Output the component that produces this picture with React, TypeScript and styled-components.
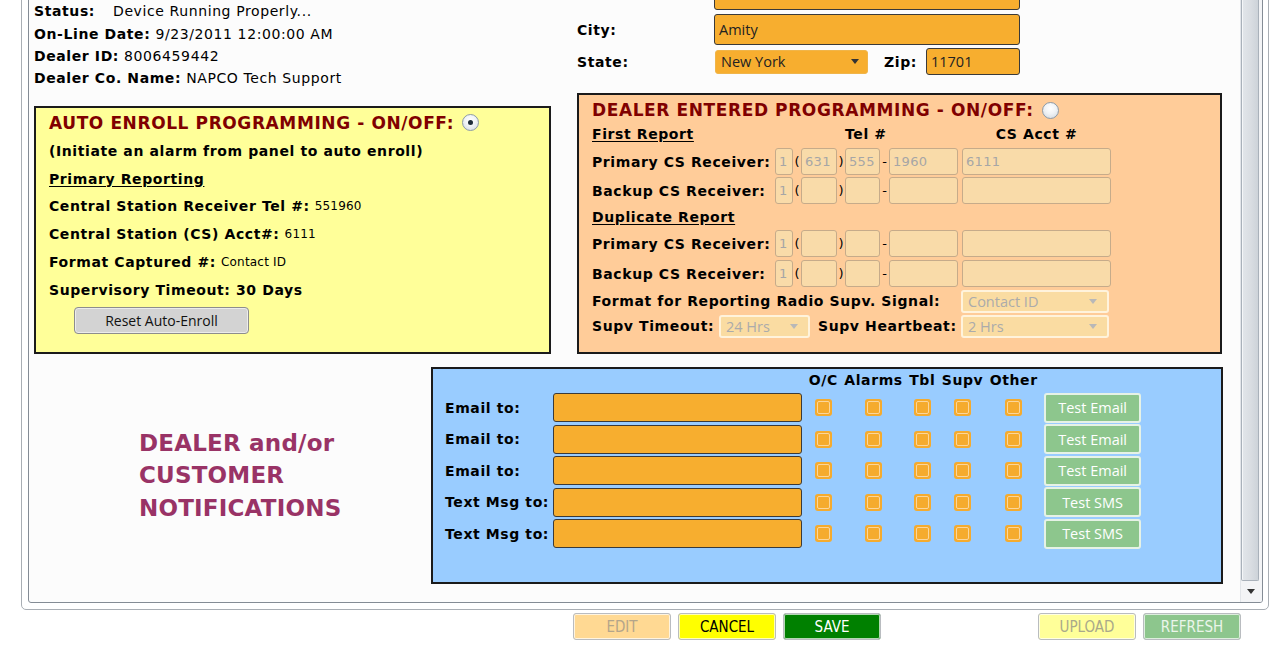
import React from 'react';
import styled, { createGlobalStyle } from 'styled-components';

const GlobalStyle = createGlobalStyle`
  html, body {
    margin: 0;
    padding: 0;
    background: #ffffff;
  }
  body {
    font-family: 'DejaVu Sans', Verdana, sans-serif;
    font-size: 14px;
    letter-spacing: 0.6px;
    color: #000;
  }
  * {
    box-sizing: border-box;
  }
`;

const UI_FONT = `'Open Sans', 'Noto Sans', sans-serif`;
const NARROW_FONT = `'Liberation Sans Narrow', 'DejaVu Sans Condensed', 'Liberation Sans', sans-serif`;

const Page = styled.div`
  width: 1271px;
  height: 663px;
  overflow: hidden;
`;

const OuterFrame = styled.div`
  margin: -14px 0 0 21px;
  width: 1248px;
  height: 624px;
  border: 1px solid #a9aeb4;
  border-radius: 0 0 5px 5px;
  padding: 0 5px 6px 6px;
  display: flex;
`;

const InnerFrame = styled.div`
  flex: 1;
  display: flex;
  border: 1px solid #848c95;
  border-radius: 0 0 3px 3px;
  background: #fcfcfc;
  overflow: hidden;
`;

const ContentArea = styled.div`
  flex: 1;
  overflow: hidden;
`;

// page is scrolled down a little: the top rows sit above the view
const ScrollContent = styled.div`
  margin-top: -10px;
  padding-left: 5px;
`;

const Scrollbar = styled.div`
  width: 22px;
  display: flex;
  flex-direction: column;
  background: #f3f4f6;
  border-left: 1px solid #e2e5e9;
`;

const ScrollThumb = styled.div`
  flex: 1;
  margin: 0 3px 0 0;
  border: 1px solid #a9b1ba;
  border-top: none;
  border-radius: 0 0 2px 2px;
  background: linear-gradient(to right, #e2e6ea, #d9dde2 55%, #cdd3d9);
  box-shadow: inset 1px 0 0 #f4f6f8;
`;

const ScrollArrow = styled.div`
  height: 21px;
  display: flex;
  align-items: center;
  justify-content: center;
  padding-right: 2px;
`;

const TopGrid = styled.div`
  display: grid;
  grid-template-columns: 517px 645px;
  grid-template-rows: 115px auto;
  column-gap: 26px;
`;

const InfoList = styled.div`
  padding-top: 22px;
`;

const InfoLine = styled.div`
  height: 22.4px;
  display: flex;
  align-items: center;
  white-space: nowrap;
`;

const InfoLabel = styled.span<{ $width?: number }>`
  font-weight: bold;
  margin-right: 5px;
  min-width: ${(p) => (p.$width ? `${p.$width}px` : 'auto')};
`;

const AddressBlock = styled.div`
  padding-top: 1px;
  display: flex;
  flex-direction: column;
`;

const FieldRow = styled.div<{ $height: number; $gap?: number }>`
  height: ${(p) => p.$height}px;
  margin-top: ${(p) => p.$gap ?? 0}px;
  display: flex;
  align-items: center;
`;

const FieldLabel = styled.span<{ $width: number; $indent?: number }>`
  width: ${(p) => p.$width}px;
  margin-left: ${(p) => p.$indent ?? 0}px;
  font-weight: bold;
  white-space: nowrap;
  flex-shrink: 0;
`;

const OrangeInput = styled.div<{ $width: number; $height: number }>`
  width: ${(p) => p.$width}px;
  height: ${(p) => p.$height}px;
  background: #f7ae2f;
  border: 1px solid #3a3a3a;
  border-radius: 3px;
  padding-left: 4px;
  display: flex;
  align-items: center;
  font-family: ${UI_FONT};
  font-size: 14.5px;
  letter-spacing: normal;
  color: #222;
  flex-shrink: 0;
`;

const OrangeSelect = styled.div<{ $width: number }>`
  width: ${(p) => p.$width}px;
  height: 24px;
  margin-left: 1px;
  background: #f7ae2f;
  border: 1px solid #f0b54a;
  border-radius: 3px;
  padding: 0 8px 0 5px;
  display: flex;
  align-items: center;
  justify-content: space-between;
  font-family: ${UI_FONT};
  font-size: 14.5px;
  letter-spacing: normal;
  color: #222;
`;

const Caret = styled.span<{ $color: string }>`
  width: 0;
  height: 0;
  border-left: 4px solid transparent;
  border-right: 4px solid transparent;
  border-top: 5px solid ${(p) => p.$color};
`;

const Panel = styled.div<{ $bg: string; $height: number }>`
  align-self: end;
  height: ${(p) => p.$height}px;
  background: ${(p) => p.$bg};
  border: 2px solid #1b1b1b;
  padding: 0 13px;
  display: flex;
  flex-direction: column;
`;

const PanelTitle = styled.div<{ $height: number }>`
  height: ${(p) => p.$height}px;
  display: flex;
  align-items: center;
  gap: 8px;
  color: #800000;
  font-weight: bold;
  font-size: 17px;
  white-space: nowrap;
`;

const Radio = styled.span<{ $checked?: boolean }>`
  width: 17px;
  height: 17px;
  border-radius: 50%;
  border: 1px solid #8c9aa8;
  background: radial-gradient(circle at 50% 35%, #ffffff 0%, #f0f3f6 45%, #cfd6de 100%);
  display: inline-flex;
  align-items: center;
  justify-content: center;
  &::after {
    content: '';
    width: 5px;
    height: 5px;
    border-radius: 50%;
    background: #1d2b38;
    display: ${(p) => (p.$checked ? 'block' : 'none')};
  }
`;

const AutoLine = styled.div`
  height: 27.8px;
  display: flex;
  align-items: center;
  white-space: nowrap;
  font-weight: bold;
`;

const SubHead = styled.span`
  font-weight: bold;
  text-decoration: underline;
  text-underline-offset: 2px;
`;

const SmallValue = styled.span`
  font-weight: normal;
  font-size: 12px;
  letter-spacing: 0.2px;
  margin-left: 5px;
`;

const GrayButton = styled.button`
  margin: 3px 0 0 25px;
  width: 175px;
  height: 27px;
  background: #d3d3d3;
  border: 1px solid #8d8d8d;
  border-radius: 4px;
  box-shadow: inset 0 0 0 1px #ececec;
  font-family: ${UI_FONT};
  font-size: 14px;
  letter-spacing: normal;
  color: #111;
  padding: 0;
`;

const DealerRow = styled.div<{ $height: number; $gap?: number }>`
  height: ${(p) => p.$height}px;
  margin-top: ${(p) => p.$gap ?? 0}px;
  display: flex;
  align-items: center;
  white-space: nowrap;
  flex-shrink: 0;
`;

const HeadCell = styled.span<{ $width: number; $center?: boolean; $indent?: number }>`
  width: ${(p) => p.$width}px;
  padding-left: ${(p) => p.$indent ?? 0}px;
  text-align: ${(p) => (p.$center ? 'center' : 'left')};
  font-weight: bold;
  flex-shrink: 0;
`;

const TanBox = styled.div<{ $width: number }>`
  width: ${(p) => p.$width}px;
  height: 27px;
  background: #f9dba9;
  border: 1px solid #c6ab8a;
  border-radius: 3px;
  padding-left: 3px;
  display: flex;
  align-items: center;
  color: #a6a6a6;
  font-size: 13px;
  letter-spacing: 0.3px;
  flex-shrink: 0;
`;

const Sep = styled.span<{ $width: number }>`
  width: ${(p) => p.$width}px;
  text-align: center;
  font-size: 13px;
  letter-spacing: normal;
  flex-shrink: 0;
`;

const TanSelect = styled.div<{ $width: number }>`
  width: ${(p) => p.$width}px;
  height: 23px;
  background: #fadca2;
  border: 2px solid #fff3dc;
  border-radius: 3px;
  padding: 0 10px 0 5px;
  display: flex;
  align-items: center;
  justify-content: space-between;
  font-family: ${UI_FONT};
  font-size: 14.5px;
  letter-spacing: normal;
  color: #ababab;
  flex-shrink: 0;
`;

const NotifySection = styled.div`
  margin-top: 13px;
  display: flex;
  align-items: center;
`;

const NotifyHeading = styled.div`
  width: 397px;
  padding-left: 105px;
  color: #993366;
  font-weight: bold;
  font-size: 23px;
  letter-spacing: 0.2px;
  line-height: 32.5px;
  flex-shrink: 0;
`;

const NotifyPanel = styled.div`
  width: 792px;
  height: 217px;
  background: #99ccff;
  border: 2px solid #1b1b1b;
  padding: 0 0 0 12px;
`;

const NotifyGrid = styled.div`
  display: grid;
  grid-template-columns: 102px 249px repeat(5, auto) 97px;
  grid-template-rows: 22px repeat(5, 30px);
  column-gap: 6.4px;
  row-gap: 1.5px;
  align-items: center;
  justify-content: start;
`;

const ColHead = styled.span`
  font-weight: bold;
  white-space: nowrap;
`;

const RowLabel = styled.span`
  font-weight: bold;
  white-space: nowrap;
`;

const CheckBox = styled.span`
  justify-self: center;
  width: 17px;
  height: 17px;
  border-radius: 3px;
  background: #f5ab2e;
  display: flex;
  align-items: center;
  justify-content: center;
  &::after {
    content: '';
    width: 11px;
    height: 11px;
    border: 1.5px solid #fbd69c;
    border-radius: 2px;
  }
`;

const TestButton = styled.button`
  width: 97px;
  height: 30px;
  background: #8dc68d;
  border: 2px solid #e6f2e6;
  border-radius: 3px;
  color: #ffffff;
  font-family: ${UI_FONT};
  font-size: 14.5px;
  letter-spacing: normal;
  padding: 0;
`;

const BottomBar = styled.div`
  margin-top: 3px;
  padding-left: 573px;
  display: flex;
  gap: 7px;
`;

const BarButton = styled.button<{ $bg: string; $fg: string; $push?: number }>`
  width: 98px;
  height: 27px;
  margin-left: ${(p) => p.$push ?? 0}px;
  background: ${(p) => p.$bg};
  color: ${(p) => p.$fg};
  border: 1px solid #b9bcc0;
  border-radius: 3px;
  box-shadow: inset 0 0 0 1px rgba(255, 255, 255, 0.7);
  font-family: ${NARROW_FONT};
  font-size: 15px;
  letter-spacing: normal;
  padding: 0;
`;

const checkCols = [0, 1, 2, 3, 4];

const notifyRows = [
  { label: 'Email to:', test: 'Test Email' },
  { label: 'Email to:', test: 'Test Email' },
  { label: 'Email to:', test: 'Test Email' },
  { label: 'Text Msg to:', test: 'Test SMS' },
  { label: 'Text Msg to:', test: 'Test SMS' },
];

function ReceiverRow({
  label,
  values,
  gap,
}: {
  label: string;
  values: string[];
  gap: number;
}) {
  return (
    <DealerRow $height={27} $gap={gap}>
      <HeadCell $width={183}>{label}</HeadCell>
      <TanBox $width={18}>1</TanBox>
      <Sep $width={8}>(</Sep>
      <TanBox $width={36}>{values[0]}</TanBox>
      <Sep $width={8}>)</Sep>
      <TanBox $width={35}>{values[1]}</TanBox>
      <Sep $width={9}>-</Sep>
      <TanBox $width={69}>{values[2]}</TanBox>
      <Sep $width={4} />
      <TanBox $width={149}>{values[3]}</TanBox>
    </DealerRow>
  );
}

export default function App() {
  return (
    <Page>
      <GlobalStyle />
      <OuterFrame>
        <InnerFrame>
          <ContentArea>
            <ScrollContent>
              <TopGrid>
                <InfoList>
                  <InfoLine>
                    <InfoLabel $width={74}>Status:</InfoLabel>
                    Device Running Properly...
                  </InfoLine>
                  <InfoLine>
                    <InfoLabel>On-Line Date:</InfoLabel>9/23/2011 12:00:00 AM
                  </InfoLine>
                  <InfoLine>
                    <InfoLabel>Dealer ID:</InfoLabel>8006459442
                  </InfoLine>
                  <InfoLine>
                    <InfoLabel>Dealer Co. Name:</InfoLabel>NAPCO Tech Support
                  </InfoLine>
                </InfoList>

                <AddressBlock>
                  <FieldRow $height={31}>
                    <FieldLabel $width={137} />
                    <OrangeInput $width={306} $height={31} />
                  </FieldRow>
                  <FieldRow $height={31} $gap={4}>
                    <FieldLabel $width={137}>City:</FieldLabel>
                    <OrangeInput $width={306} $height={31}>
                      Amity
                    </OrangeInput>
                  </FieldRow>
                  <FieldRow $height={27} $gap={3}>
                    <FieldLabel $width={137}>State:</FieldLabel>
                    <OrangeSelect $width={153}>
                      New York
                      <Caret $color="#333" />
                    </OrangeSelect>
                    <FieldLabel $width={42} $indent={16}>
                      Zip:
                    </FieldLabel>
                    <OrangeInput $width={94} $height={27}>
                      11701
                    </OrangeInput>
                  </FieldRow>
                </AddressBlock>

                <Panel $bg="#ffff99" $height={248}>
                  <PanelTitle $height={29}>
                    AUTO ENROLL PROGRAMMING - ON/OFF:
                    <Radio $checked />
                  </PanelTitle>
                  <AutoLine>(Initiate an alarm from panel to auto enroll)</AutoLine>
                  <AutoLine>
                    <SubHead>Primary Reporting</SubHead>
                  </AutoLine>
                  <AutoLine>
                    Central Station Receiver Tel #:<SmallValue>551960</SmallValue>
                  </AutoLine>
                  <AutoLine>
                    Central Station (CS) Acct#:<SmallValue>6111</SmallValue>
                  </AutoLine>
                  <AutoLine>
                    Format Captured #:<SmallValue>Contact ID</SmallValue>
                  </AutoLine>
                  <AutoLine>Supervisory Timeout: 30 Days</AutoLine>
                  <div>
                    <GrayButton>Reset Auto-Enroll</GrayButton>
                  </div>
                </Panel>

                <Panel $bg="#ffcc99" $height={261}>
                  <PanelTitle $height={30}>
                    DEALER ENTERED PROGRAMMING - ON/OFF:
                    <Radio />
                  </PanelTitle>
                  <DealerRow $height={18}>
                    <HeadCell $width={253}>
                      <SubHead>First Report</SubHead>
                    </HeadCell>
                    <HeadCell $width={117}>Tel #</HeadCell>
                    <HeadCell $width={149} $center>
                      CS Acct #
                    </HeadCell>
                  </DealerRow>
                  <ReceiverRow
                    label="Primary CS Receiver:"
                    values={['631', '555', '1960', '6111']}
                    gap={5}
                  />
                  <ReceiverRow label="Backup CS Receiver:" values={['', '', '', '']} gap={2} />
                  <DealerRow $height={26}>
                    <SubHead>Duplicate Report</SubHead>
                  </DealerRow>
                  <ReceiverRow label="Primary CS Receiver:" values={['', '', '', '']} gap={0} />
                  <ReceiverRow label="Backup CS Receiver:" values={['', '', '', '']} gap={3} />
                  <DealerRow $height={22} $gap={3}>
                    <HeadCell $width={369}>Format for Reporting Radio Supv. Signal:</HeadCell>
                    <TanSelect $width={148}>
                      Contact ID
                      <Caret $color="#b8b8b8" />
                    </TanSelect>
                  </DealerRow>
                  <DealerRow $height={22} $gap={3}>
                    <HeadCell $width={127}>Supv Timeout:</HeadCell>
                    <TanSelect $width={91}>
                      24 Hrs
                      <Caret $color="#b8b8b8" />
                    </TanSelect>
                    <HeadCell $width={151} $indent={8}>
                      Supv Heartbeat:
                    </HeadCell>
                    <TanSelect $width={148}>
                      2 Hrs
                      <Caret $color="#b8b8b8" />
                    </TanSelect>
                  </DealerRow>
                </Panel>
              </TopGrid>

              <NotifySection>
                <NotifyHeading>
                  DEALER and/or
                  <br />
                  CUSTOMER
                  <br />
                  NOTIFICATIONS
                </NotifyHeading>
                <NotifyPanel>
                  <NotifyGrid>
                    <span />
                    <span />
                    <ColHead>O/C</ColHead>
                    <ColHead>Alarms</ColHead>
                    <ColHead>Tbl</ColHead>
                    <ColHead>Supv</ColHead>
                    <ColHead>Other</ColHead>
                    <span />
                    {notifyRows.map((row, idx) => (
                      <React.Fragment key={idx}>
                        <RowLabel>{row.label}</RowLabel>
                        <OrangeInput $width={249} $height={29} />
                        {checkCols.map((c) => (
                          <CheckBox key={c} />
                        ))}
                        <TestButton>{row.test}</TestButton>
                      </React.Fragment>
                    ))}
                  </NotifyGrid>
                </NotifyPanel>
              </NotifySection>
            </ScrollContent>
          </ContentArea>
          <Scrollbar>
            <ScrollThumb />
            <ScrollArrow>
              <Caret $color="#333" />
            </ScrollArrow>
          </Scrollbar>
        </InnerFrame>
      </OuterFrame>

      <BottomBar>
        <BarButton $bg="#ffd993" $fg="#b4a58a">EDIT</BarButton>
        <BarButton $bg="#ffff00" $fg="#000">CANCEL</BarButton>
        <BarButton $bg="#008000" $fg="#fff">SAVE</BarButton>
        <BarButton $bg="#ffff99" $fg="#a9a98a" $push={150}>
          UPLOAD
        </BarButton>
        <BarButton $bg="#8dc68d" $fg="#eaf5ea">REFRESH</BarButton>
      </BottomBar>
    </Page>
  );
}
